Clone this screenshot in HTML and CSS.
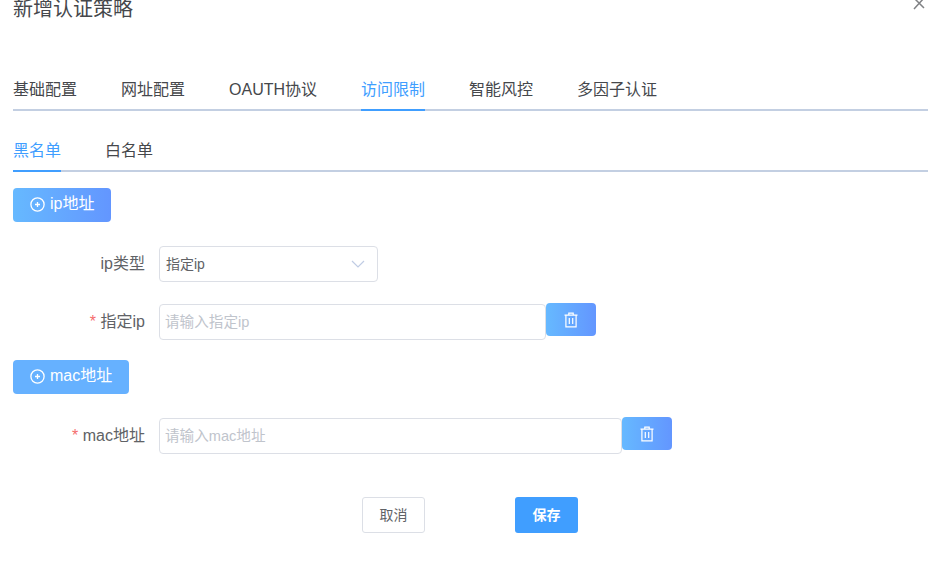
FILE: index.html
```html
<!DOCTYPE html>
<html lang="en">
<head>
  <meta charset="UTF-8">
  <meta name="viewport" content="width=device-width, initial-scale=1.0">
  <title>新增认证策略</title>
  <link rel="stylesheet" href="styles.css">
</head>
<body>
  <div class="dialog">
    <button class="close" aria-label="关闭">
      <svg width="12" height="12" viewBox="0 0 12 12"><path d="M1 -2L11 8M11 -2L1 9" fill="none" stroke="#808285" stroke-width="1.5"/></svg>
    </button>
    <h2 class="title">新增认证策略</h2>

    <div class="tabs">
      <a class="tab">基础配置</a>
      <a class="tab">网址配置</a>
      <a class="tab">OAUTH协议</a>
      <a class="tab active">访问限制</a>
      <a class="tab">智能风控</a>
      <a class="tab">多因子认证</a>
    </div>

    <div class="tabs sub">
      <a class="tab active">黑名单</a>
      <a class="tab">白名单</a>
    </div>

    <button class="btn-add add-ip">
      <svg class="plus" width="15" height="15" viewBox="0 0 15 15"><circle cx="7.5" cy="7.5" r="6.6" fill="none" stroke="#fff" stroke-width="1.3"/><path d="M7.5 5v5M5 7.5h5" stroke="#fff" stroke-width="1.3"/></svg>
      <span>ip地址</span>
    </button>

    <div class="row row-type">
      <label class="label">ip类型</label>
      <div class="select">
        <span>指定ip</span>
        <svg width="14" height="8" viewBox="0 0 14 8"><path d="M1 1l6 6 6-6" fill="none" stroke="#c0cce4" stroke-width="1.2"/></svg>
      </div>
    </div>

    <div class="row row-ip">
      <label class="label"><i>*</i> 指定ip</label>
      <input class="input input-ip" placeholder="请输入指定ip">
      <button class="btn-del">
        <svg width="16" height="16" viewBox="0 0 16 16"><path d="M1.5 3.2h13M5.8 3V1.2h4.4V3M2.9 3.2v11.6h10.2V3.2M6.3 6v6M9.7 6v6" fill="none" stroke="#fff" stroke-width="1.2"/></svg>
      </button>
    </div>

    <button class="btn-add add-mac">
      <svg class="plus" width="15" height="15" viewBox="0 0 15 15"><circle cx="7.5" cy="7.5" r="6.6" fill="none" stroke="#fff" stroke-width="1.3"/><path d="M7.5 5v5M5 7.5h5" stroke="#fff" stroke-width="1.3"/></svg>
      <span>mac地址</span>
    </button>

    <div class="row row-mac">
      <label class="label"><i>*</i> mac地址</label>
      <input class="input input-mac" placeholder="请输入mac地址">
      <button class="btn-del">
        <svg width="16" height="16" viewBox="0 0 16 16"><path d="M1.5 3.2h13M5.8 3V1.2h4.4V3M2.9 3.2v11.6h10.2V3.2M6.3 6v6M9.7 6v6" fill="none" stroke="#fff" stroke-width="1.2"/></svg>
      </button>
    </div>

    <div class="footer">
      <button class="btn-cancel">取消</button>
      <button class="btn-save">保存</button>
    </div>
  </div>
</body>
</html>
```
FILE: styles.css
```css
* {
  box-sizing: border-box;
}
body {
  font-family: "Liberation Sans", "Noto Sans CJK SC", sans-serif;
  margin: 0;
  padding: 0;
  background-color: #ffffff;
  overflow: hidden;
}
button {
  font-family: inherit;
}
.dialog {
  position: relative;
  width: 947px;
  height: 567px;
  padding: 0 19px 0 13px;
  overflow: hidden;
}
.close {
  position: absolute;
  top: 0;
  right: 22px;
  width: 12px;
  height: 12px;
  padding: 0;
  border: 0;
  background: none;
}
.title {
  margin: 0;
  height: 18px;
  font-size: 20px;
  line-height: 18px;
  font-weight: normal;
  color: #45474b;
}
.tabs {
  display: flex;
  gap: 44px;
  height: 36px;
  margin-top: 57px;
  border-bottom: 2px solid #c3cfe2;
}
.tab {
  height: 36px;
  font-size: 16px;
  line-height: 30px;
  color: #45474b;
}
.tab.active {
  color: #409eff;
  border-bottom: 2px solid #409eff;
}
.tabs.sub {
  margin-top: 25px;
}
.btn-add {
  display: flex;
  align-items: center;
  height: 34px;
  padding: 0 16px 0 17px;
  border: 0;
  border-radius: 4px;
  font-size: 16px;
  color: #fff;
  background: linear-gradient(90deg, #66b9ff, #6396ff);
}
.btn-add span {
  line-height: 30px;
  margin-top: -3px;
  margin-right: 1px;
}
.plus {
  margin-right: 5px;
  margin-top: -2px;
}
.add-ip {
  margin-top: 16px;
}
.add-mac {
  margin-top: 20px;
  background: #66b1ff;
}
.row {
  display: flex;
  align-items: flex-start;
}
.row-type {
  margin-top: 24px;
}
.row-ip {
  margin-top: 22px;
}
.row-mac {
  margin-top: 24px;
}
.label {
  width: 132px;
  margin-right: 14px;
  font-size: 16px;
  line-height: 36px;
  text-align: right;
  color: #606266;
}
.label i {
  font-style: normal;
  color: #f56c6c;
}
.select {
  display: flex;
  align-items: center;
  justify-content: space-between;
  width: 219px;
  height: 36px;
  padding: 0 12px 0 6px;
  border: 1px solid #dcdfe6;
  border-radius: 4px;
  font-size: 14px;
  line-height: 32px;
  color: #606266;
}
.select span {
  margin-top: -1px;
}
.input {
  height: 36px;
  padding: 0 5px;
  border: 1px solid #dcdfe6;
  border-radius: 4px;
  font-family: inherit;
  font-size: 14.6px;
  color: #606266;
  outline: none;
}
.input::placeholder {
  color: #c0c4cc;
}
.input-ip {
  width: 387px;
}
.input-mac {
  width: 463px;
}
.btn-del {
  display: flex;
  align-items: center;
  justify-content: center;
  width: 50px;
  height: 33px;
  margin-top: -1px;
  padding: 0;
  border: 0;
  border-radius: 4px;
  background: linear-gradient(90deg, #66b9ff, #6396ff);
}
.footer {
  display: flex;
  gap: 90px;
  margin-top: 43px;
  padding-left: 349px;
}
.btn-cancel,
.btn-save {
  width: 63px;
  height: 36px;
  padding: 0 0 3px;
  border-radius: 3px;
  font-size: 14px;
}
.btn-cancel {
  border: 1px solid #dcdfe6;
  background: #fff;
  color: #606266;
}
.btn-save {
  border: 0;
  background: #409eff;
  color: #fff;
  font-weight: bold;
}
```
